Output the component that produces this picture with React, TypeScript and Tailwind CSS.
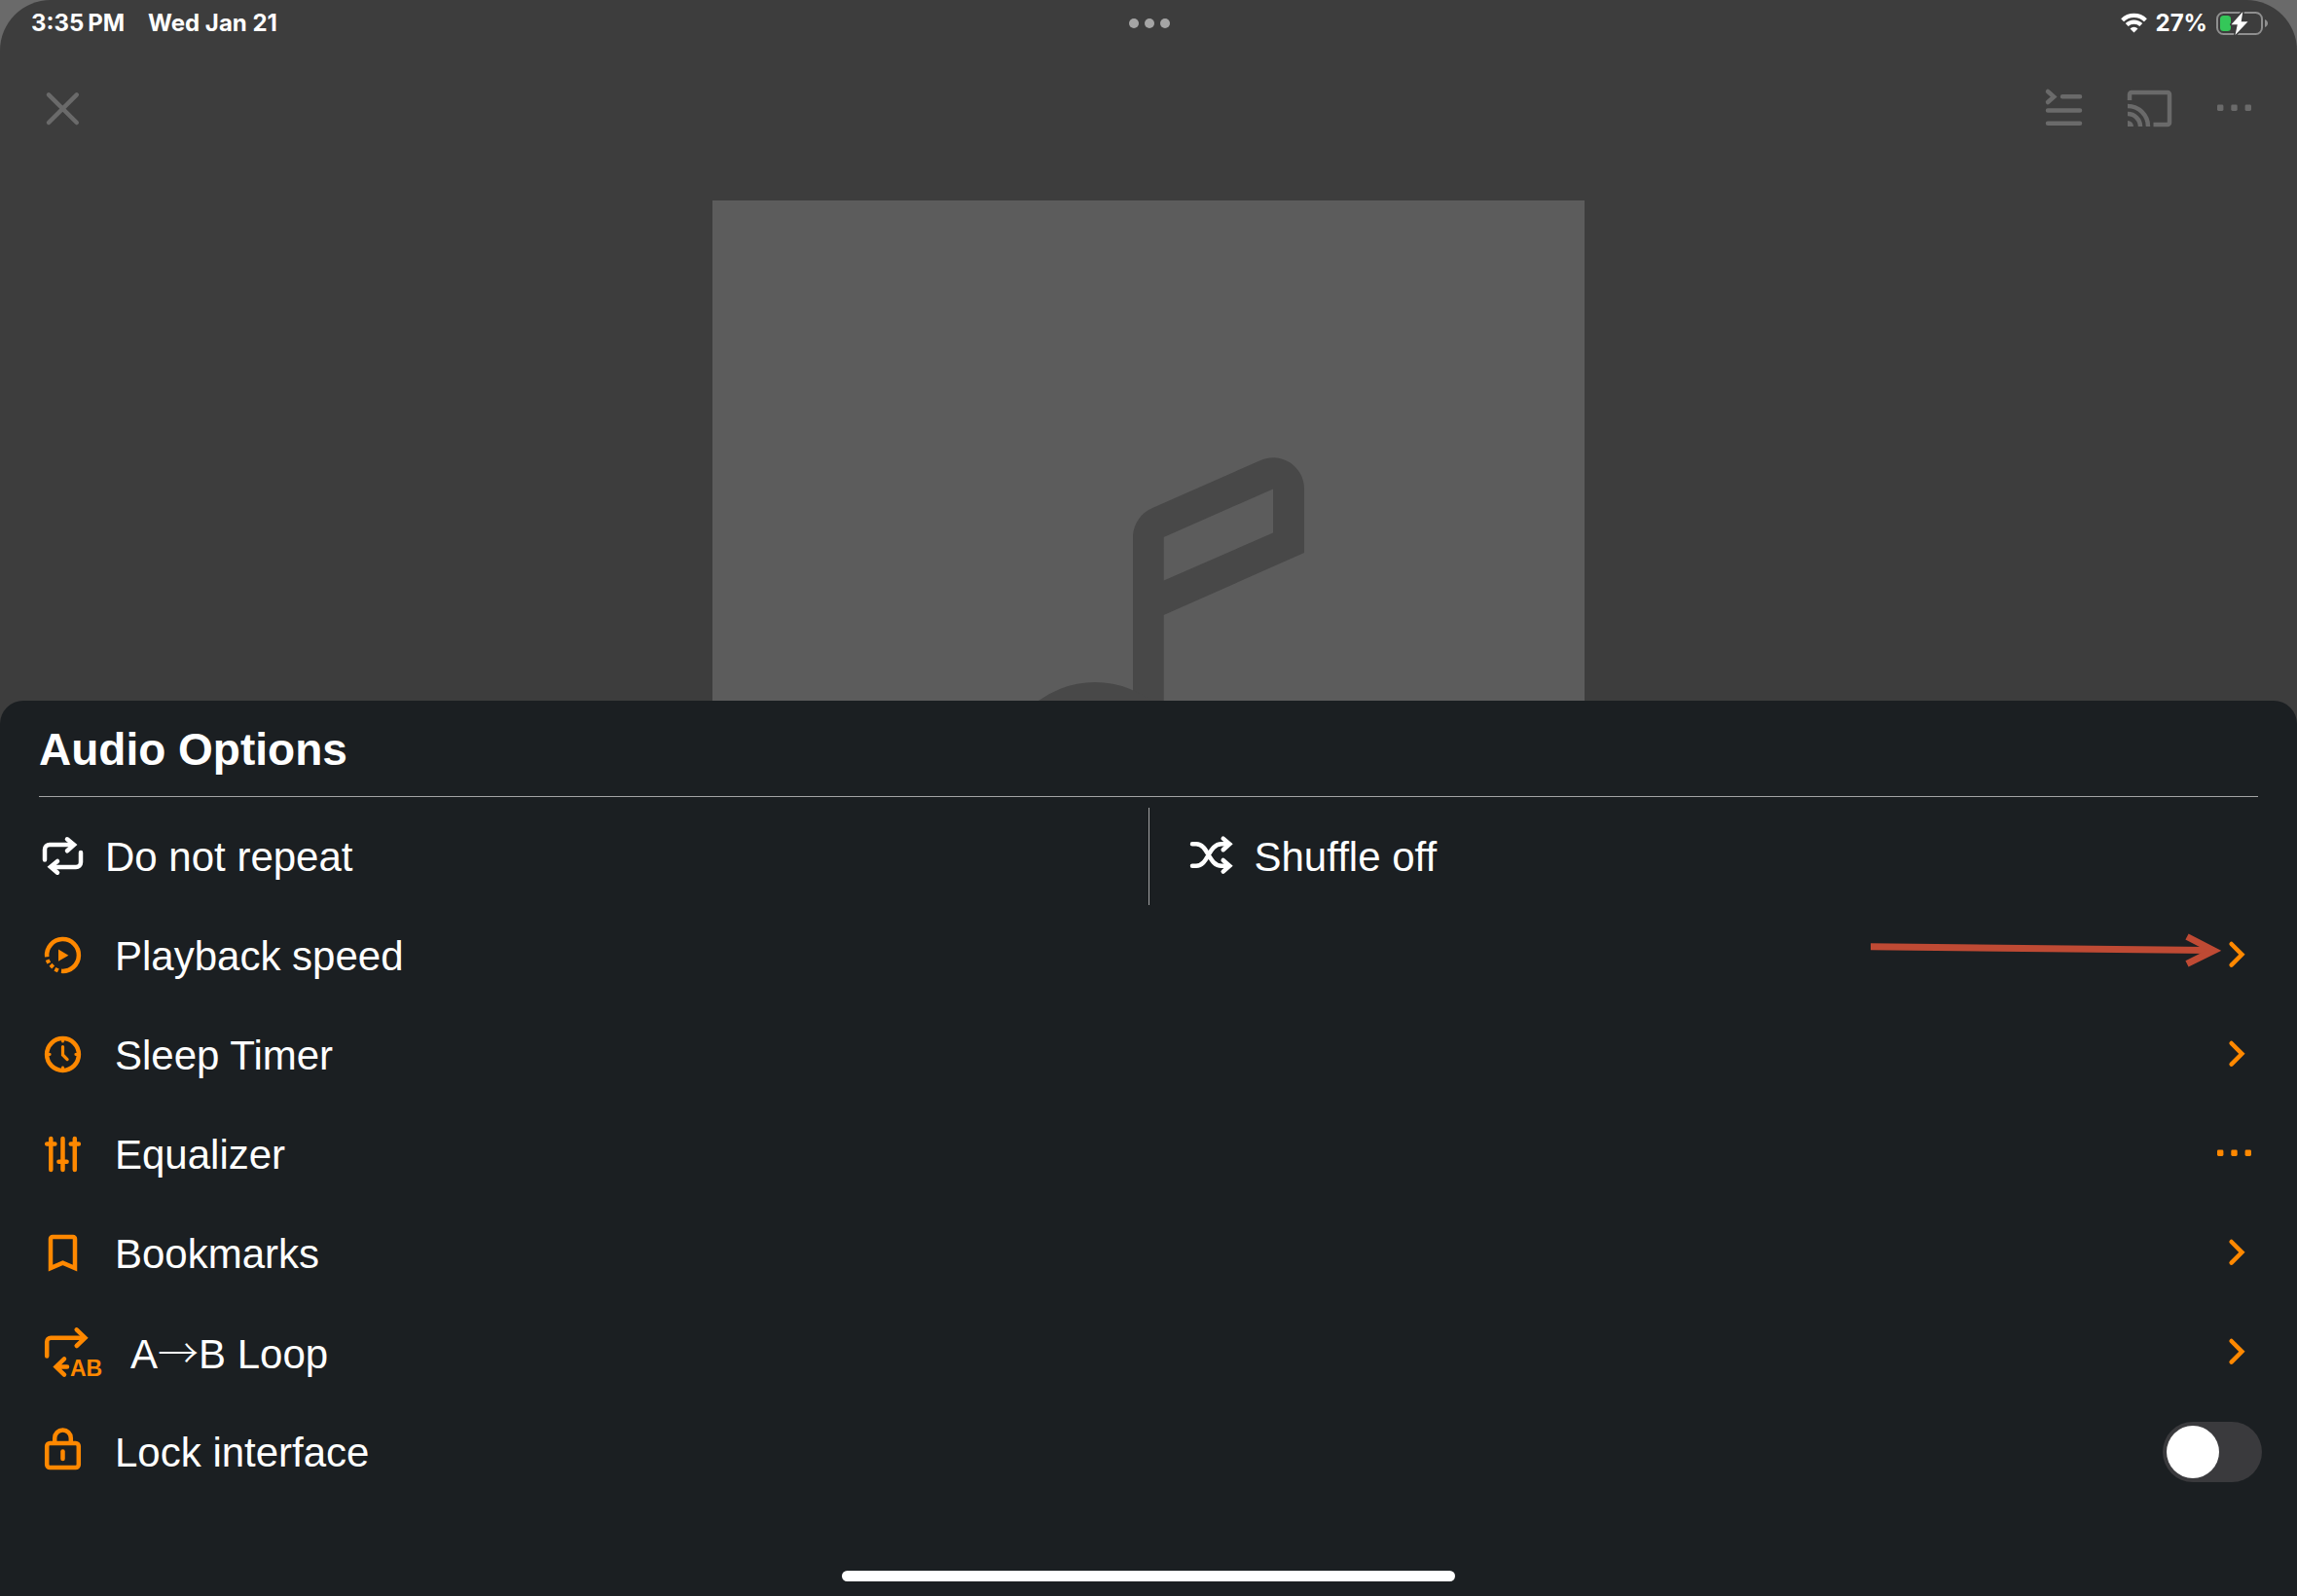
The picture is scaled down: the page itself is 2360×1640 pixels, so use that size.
import React, { useState } from 'react';

interface IconProps {
  className?: string;
  width?: number;
  children: React.ReactNode;
}

// Stroked icon on a 52px tall grid, width varies per icon
function Icon({ className = '', width = 43, children }: IconProps) {
  return (
    <svg
      width={width}
      height={52}
      viewBox={`0 0 ${width} 52`}
      fill="none"
      stroke="currentColor"
      strokeWidth={4.5}
      strokeLinecap="round"
      aria-hidden="true"
      className={`shrink-0 overflow-visible ${className}`}
    >
      {children}
    </svg>
  );
}

const MoreIcon = () => (
  <Icon width={48}>
    <g fill="currentColor" stroke="none">
      <rect x="2" y="21.5" width="6.4" height="6.4" rx="1.4" />
      <rect x="16.3" y="21.5" width="6.4" height="6.4" rx="1.4" />
      <rect x="30.6" y="21.5" width="6.4" height="6.4" rx="1.4" />
    </g>
  </Icon>
);

const ChevronIcon = () => (
  <Icon width={48}>
    <path d="M16.6 14 27.4 24.8 16.6 35.6" />
  </Icon>
);

const SpeedIcon = () => (
  <Icon>
    <path d="M2.2 27.2A16.4 16.4 0 1 1 17 41.8" strokeLinecap="butt" />
    <g fill="currentColor" stroke="none">
      <rect x="1.4" y="30.1" width="4.1" height="3.8" transform="rotate(-25 3.4 32)" />
      <rect x="5.3" y="34.8" width="4.1" height="3.8" transform="rotate(-45 7.3 36.7)" />
      <rect x="10.2" y="38.6" width="3.8" height="4.1" transform="rotate(25 12.1 40.6)" />
      <path d="M14 19.5v12.3l10.4-6.1z" />
    </g>
  </Icon>
);

const ClockIcon = () => (
  <Icon>
    <circle cx="18.5" cy="25.5" r="16.4" />
    <path d="M18.5 11v1.2M18.5 38.8V40M4 25.5h1.2M31.8 25.5H33" strokeWidth="2.8" />
    <path d="M18.5 17.5V26l4.6 4.6" strokeWidth="3.2" />
  </Icon>
);

const EqualizerIcon = () => (
  <Icon>
    <path d="M6.3 10v32M18.5 10v32M30.8 10v32" />
    <path d="M2.2 15.5h8.2M14.4 33.8h8.2M26.7 15.5h8.2" />
  </Icon>
);

const BookmarkIcon = () => (
  <Icon>
    <path d="M6 41V11a2 2 0 0 1 2-2h21a2 2 0 0 1 2 2v30l-12.5-5.4z" />
  </Icon>
);

const LoopIcon = () => (
  <Icon width={59}>
    <path d="M2.2 29.5V14.7a4 4 0 0 1 4-4h34" />
    <path d="M32.7 2.4l8.7 8.3-8.7 8.3" />
    <path d="M20 32.3l-8.4 8.2 8.4 8.2M13 40.5h10" />
    <text
      x="26"
      y="50"
      fill="currentColor"
      stroke="none"
      fontSize="23"
      fontWeight="700"
      fontFamily="'Liberation Sans', Arial, sans-serif"
    >
      AB
    </text>
  </Icon>
);

const LockIcon = () => (
  <Icon>
    <rect x="2.2" y="17" width="32.6" height="25" rx="3" />
    <path d="M10.2 16v-4.3a8.3 8.3 0 0 1 16.6 0V16" strokeLinecap="butt" />
    <path d="M18.5 25.5V33" />
  </Icon>
);

const RepeatIcon = () => (
  <Icon width={48}>
    <path d="M4 29.5V19a5 5 0 0 1 5-5h24" />
    <path d="M27 8.3l7 5.8-7 6.2" />
    <path d="M41 22v10a5 5 0 0 1-5 5H12" />
    <path d="M17 31l-7 5.7 7 6" />
  </Icon>
);

const ShuffleIcon = () => (
  <Icon width={48}>
    <path d="M2 13.3h4c12.5 0 12.5 22.4 26 22.4h6M2 35.7h4c12.5 0 12.5-22.4 26-22.4h6" />
    <path d="M33.7 7.6l6.6 5.7-6.6 5.9M33.7 30l6.6 5.7-6.6 5.9" />
  </Icon>
);

function WifiIcon() {
  return (
    <svg width="28" height="22" viewBox="0 0 28 22" fill="none" stroke="#fff" aria-hidden="true">
      <path d="M1.6 7.7A17 17 0 0 1 25.4 7.7" strokeWidth="4.2" />
      <path d="M6.2 12.6a10.5 10.5 0 0 1 14.6 0" strokeWidth="4.2" />
      <path d="M9.5 16.4a5.6 5.6 0 0 1 8 0L13.5 20.6z" fill="#fff" stroke="none" />
    </svg>
  );
}

function BatteryIcon() {
  return (
    <svg width="54" height="26" viewBox="0 0 54 26" fill="none" aria-hidden="true">
      <rect x="2" y="2" width="46" height="22" rx="6.5" stroke="#8f8f8f" strokeWidth="2" />
      <path d="M51 9c4 1.5 4 6.5 0 8z" fill="#8f8f8f" />
      <rect x="5" y="5" width="11" height="16" rx="3.5" fill="#34c759" />
      <path
        d="M28.3 1 16.5 14.2h6.3L20.5 25 33.5 11.2h-6.8z"
        fill="#fff"
        stroke="#3d3d3d"
        strokeWidth="3"
        strokeLinejoin="round"
        paintOrder="stroke"
      />
    </svg>
  );
}

function Artwork() {
  return (
    <div className="aspect-square w-[896px] max-w-full bg-[#5c5c5c]">
      <svg viewBox="732 206 896 896" className="w-full" aria-hidden="true">
        <path
          fill="#484848"
          fillRule="evenodd"
          d="M1164 710V550A33 33 0 0 1 1184 522L1294 473.5A32 32 0 0 1 1340 502V568L1195.7 632V799H1164ZM1195.7 552V596.5L1308 547.5V502.5Z"
        />
        <circle cx="1125" cy="799" r="82" fill="none" stroke="#484848" strokeWidth="32" />
      </svg>
    </div>
  );
}

interface Option {
  label: React.ReactNode;
  id: string;
  icon: React.ReactNode;
  trailing: React.ReactNode;
  highlighted?: boolean;
}

const options: Option[] = [
  { id: 'speed', label: 'Playback speed', icon: <SpeedIcon />, trailing: <ChevronIcon />, highlighted: true },
  { id: 'sleep', label: 'Sleep Timer', icon: <ClockIcon />, trailing: <ChevronIcon /> },
  { id: 'equalizer', label: 'Equalizer', icon: <EqualizerIcon />, trailing: <MoreIcon /> },
  { id: 'bookmarks', label: 'Bookmarks', icon: <BookmarkIcon />, trailing: <ChevronIcon /> },
  {
    id: 'loop',
    label: (
      <>
        A<span className="font-['Noto_Sans_CJK_JP',sans-serif] leading-none font-light">→</span>B Loop
      </>
    ),
    icon: <LoopIcon />,
    trailing: <ChevronIcon />,
  },
];

// Red pointer towards a row's chevron
function Pointer() {
  return (
    <svg
      viewBox="0 0 360 102"
      fill="none"
      stroke="#bf4a34"
      strokeWidth="7"
      aria-hidden="true"
      className="pointer-events-none absolute inset-y-0 right-[78px] h-full w-[360px]"
    >
      <path d="M0 41.7 348 45.6" />
      <path d="M325 31.5 352.5 45.7 325 59.3" strokeMiterlimit="10" />
    </svg>
  );
}

export default function App() {
  const [locked, setLocked] = useState(false);

  return (
    <div className="bg-[#6a6a6a]">
      <div className="flex min-h-screen flex-col overflow-hidden rounded-t-[52px] bg-[#3d3d3d] font-['Liberation_Sans',Arial,sans-serif] text-white">
        <header className="grid h-12 grid-cols-3 items-center pr-[30px] pl-8 font-['Inter',sans-serif] text-2xl font-bold">
          <div className="flex gap-6">
            <span>3:35{'\u2009'}PM</span>
            <span>Wed Jan 21</span>
          </div>
          <div className="flex justify-center gap-1.5">
            <span className="size-2.5 rounded-full bg-[#a5a5a5]" />
            <span className="size-2.5 rounded-full bg-[#a5a5a5]" />
            <span className="size-2.5 rounded-full bg-[#a5a5a5]" />
          </div>
          <div className="flex items-center justify-end gap-2">
            <WifiIcon />
            <span>27%</span>
            <BatteryIcon />
          </div>
        </header>

        <nav className="flex h-32 items-center justify-between pr-9 pl-[46px] text-[#6a6a6a]">
          <button type="button" aria-label="Close">
            <Icon>
              <path d="M4 11.3 32.8 40M32.8 11.3 4 40" />
            </Icon>
          </button>
          <div className="flex items-center gap-11">
            <button type="button" aria-label="Queue">
              <Icon width={40}>
                <path d="M4 8l6.2 5.5L4 19M19 13.2h18M4 27.5h33M4 40.7h33" />
              </Icon>
            </button>
            <button type="button" aria-label="Cast">
              <Icon width={48}>
                <g strokeLinecap="butt">
                  <path d="M4 17v-6a2 2 0 0 1 2-2h37a2 2 0 0 1 2 2v29a2 2 0 0 1-2 2H28.5" />
                  <path d="M2 23a21 21 0 0 1 21 21M2 31a13 13 0 0 1 13 13" />
                  <path d="M2 38a6 6 0 0 1 6 6H2z" fill="currentColor" stroke="none" />
                </g>
              </Icon>
            </button>
            <button type="button" aria-label="More">
              <MoreIcon />
            </button>
          </div>
        </nav>

        <main className="flex min-h-0 flex-1 basis-0 items-start justify-center overflow-hidden pt-[30px]">
          <Artwork />
        </main>

        <section className="rounded-t-3xl bg-[#1b1f22] text-[42px] leading-[48px]">
          <div className="px-10">
            <h1 className="flex h-[99px] items-center border-b border-[#a3a4a5] pt-0.5 text-[46px] font-bold">
              Audio Options
            </h1>
          </div>

          <div className="mt-2.5 flex h-[102px] items-center">
            <button type="button" className="flex h-full flex-1 items-center gap-[18px] pl-[42px]">
              <RepeatIcon />
              <span className="pt-0.5">Do not repeat</span>
            </button>
            <div className="h-[100px] w-px bg-[#a3a4a5]" />
            <button type="button" className="flex h-full flex-1 items-center gap-[18px] pl-[42px]">
              <ShuffleIcon />
              <span className="pt-0.5">Shuffle off</span>
            </button>
          </div>

          <ul>
            {options.map((option) => (
              <li key={option.id} className="relative">
                <button type="button" className="flex h-[102px] w-full items-center gap-[29px] pr-9 pl-[46px] text-left">
                  <span className="text-[#ff8800]">{option.icon}</span>
                  <span className="flex-1 pt-0.5">{option.label}</span>
                  <span className="text-[#ff8800]">{option.trailing}</span>
                </button>
                {option.highlighted && <Pointer />}
              </li>
            ))}
            <li>
              <label className="flex h-[102px] cursor-pointer items-center gap-[29px] pr-9 pl-[46px]">
                <span className="text-[#ff8800]">
                  <LockIcon />
                </span>
                <span className="flex-1 pt-0.5">Lock interface</span>
                <input
                  type="checkbox"
                  role="switch"
                  checked={locked}
                  onChange={(e) => setLocked(e.target.checked)}
                  className="h-[62px] w-[102px] appearance-none rounded-full bg-[#3a3a3d] p-1 transition-colors before:block before:size-[54px] before:rounded-full before:bg-white before:transition-transform checked:bg-[#ff8800] checked:before:translate-x-10"
                />
              </label>
            </li>
          </ul>

          <div className="flex justify-center pt-[71px] pb-[15px]">
            <div className="h-[11px] w-[630px] max-w-full rounded-full bg-white" />
          </div>
        </section>
      </div>
    </div>
  );
}
